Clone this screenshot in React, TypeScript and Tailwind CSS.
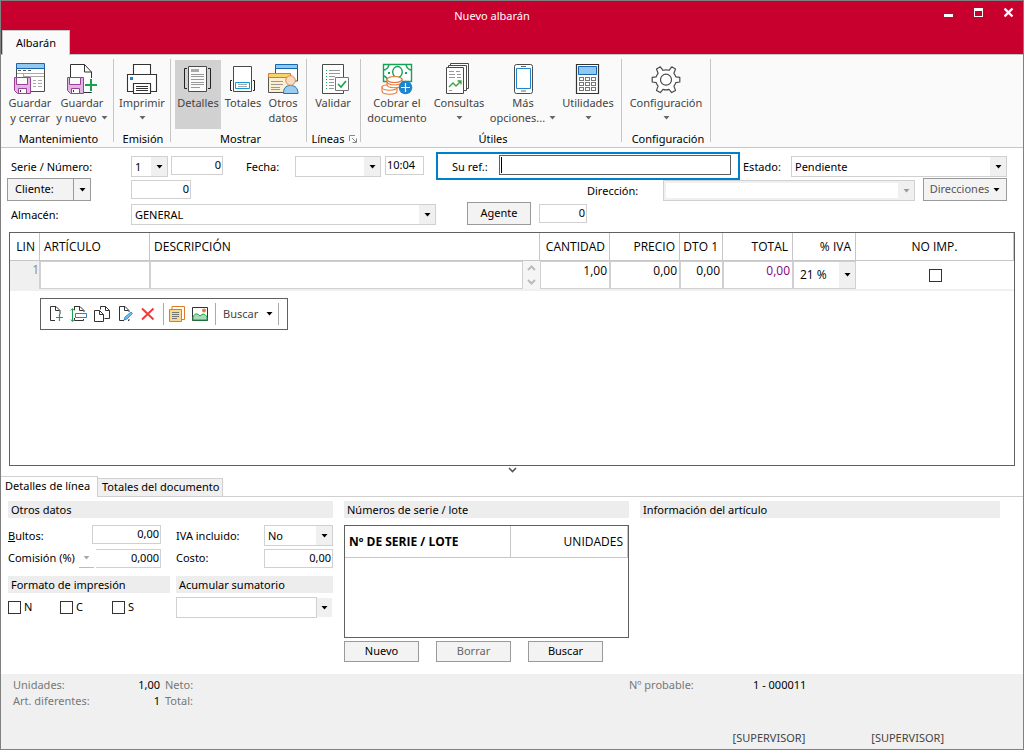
import React from "react";

const LINE = "#4a4a4a";

function Caret({ className = "text-black" }: { className?: string }) {
  return (
    <svg width="7" height="4" viewBox="0 0 7 4" className={"shrink-0 " + className} aria-hidden="true">
      <path d="M0.5 0h6L3.5 3.6z" fill="currentColor" />
    </svg>
  );
}

function Floppy({ x, y }: { x: number; y: number }) {
  return (
    <g transform={`translate(${x} ${y})`} stroke="#9b3f9b">
      <path d="M.5.5h16v16h-13l-3-3z" fill="#dfb6df" />
      <path d="M2.500.5h11v7h-11z" fill="#fafafa" />
      <path d="M4.500 11.500h8v5h-8z" fill="#fafafa" />
      <path d="M6.500 13v2" stroke="#333" />
    </g>
  );
}

function SaveCloseIcon() {
  return (
    <svg width="32" height="32" viewBox="0 0 32 32" fill="none">
      <path d="M2.500 2.500h28v26h-28z" fill="#fff" stroke={LINE} />
      <path d="M2.500.5h28v5h-28z" fill="#91c8f0" stroke="#1667b0" />
      <path d="M4 7.500h3m2 0h3m2 0h3" stroke="#555" />
      <path d="M3 10.500h27M9.500 11v3M9 13.500h21" stroke="#aaa" />
      <path d="M19 17.500h3m2 0h4M19 20.500h3m2 0h4M19 23.500h3m2 0h4" stroke="#aaa" />
      <Floppy x={0} y={14} />
    </svg>
  );
}

function SaveNewIcon() {
  return (
    <svg width="32" height="32" viewBox="0 0 32 32" fill="none">
      <path d="M4.500 1.500h14l7 7.500v20.500h-21z" fill="#fff" stroke="#333" />
      <path d="M18.500 1.500v7.500h7" stroke="#333" />
      <path d="M25.500 15v14" stroke="#fafafa" strokeWidth="4" />
      <Floppy x={1} y={14} />
      <path d="M25 16v12M19 22h12" stroke="#16a34a" strokeWidth="2" />
    </svg>
  );
}

function PrintIcon() {
  return (
    <svg width="32" height="32" viewBox="0 0 32 32" fill="none" stroke="#333" strokeWidth="1.100">
      <path d="M7.500 11V1.500h17V11" fill="#fff" />
      <path d="M1.500 11.500h29v17h-6v-7h-17v7h-6z" fill="#fff" />
      <path d="M7.500 20.500h17v10h-17z" fill="#fff" />
      <path d="M10 23.500h12m-12 2h12m-12 2h12" strokeWidth="1" />
      <path d="M4 14h3v3H4z" fill="#1d84cf" stroke="none" />
    </svg>
  );
}

function DetailsIcon() {
  return (
    <svg width="32" height="32" viewBox="0 0 32 32" fill="none">
      <path d="M6.500 3.500h18v25h-18z" fill="#fafafa" stroke={LINE} />
      <path d="M9 6h8v3H9z" fill="#aaa" />
      <path d="M9 11.500h13m-13 2h13m-13 3h13m-13 3h13m-13 2h13m-13 3h9" stroke="#999" />
      <path d="M5 5.500H2.500v20H5M26 5.500h2.500v20H26" stroke="#222" />
    </svg>
  );
}

function TotalsIcon() {
  return (
    <svg width="32" height="32" viewBox="0 0 32 32" fill="none">
      <path d="M6.500 3.500h18v25h-18z" fill="#fff" stroke={LINE} />
      <path d="M8.500 19.500h14v6h-14z" stroke="#1597d5" />
      <path d="M11 21.500h9m-9 2h9" stroke="#aaa" />
      <path d="M5 17.500H3.500v10H5M26 17.500h1.500v10H26" stroke="#222" />
    </svg>
  );
}

function OtherIcon() {
  return (
    <svg width="32" height="32" viewBox="0 0 32 32" fill="none">
      <path d="M8.500 5h22v13h-22z" fill="#fff" stroke={LINE} />
      <path d="M8.500 1.500h22V5.500h-22z" fill="#91c8f0" stroke="#1667b0" />
      <path d="M1.500 11h22v18.500h-22z" fill="#fdf0cf" stroke="#555" />
      <path d="M1.500 10.500h22V14.500h-22z" fill="#f9d36b" stroke="#e07a26" />
      <path d="M4 18.500h12m-12 3h12m-12 3h9m-9 2h9" stroke="#999" />
      <path d="M16.500 30.500c0-5 2-8 7-8s7.500 3 7.500 8z" fill="#9bcdf0" stroke="#1d74b8" />
      <circle cx="23.500" cy="17.500" r="4.800" fill="#f9dcc0" stroke="#dc8b50" />
    </svg>
  );
}

function ValidateIcon() {
  return (
    <svg width="32" height="32" viewBox="0 0 32 32" fill="none">
      <path d="M5.500 1.500h21v29h-21z" fill="#fff" stroke={LINE} />
      <path d="M12 7.500h11m-11 3h11m-11 3h6m-6 3h5m-5 3h5m-5 3h5m-5 3h5" stroke="#999" />
      <path d="M9.500 7v1m0 5v1m0 5v1m0 5v1" stroke="#16a34a" />
      <path d="M9.500 10v1m0 5v1m0 5v1" stroke="#d33" />
      <path d="M18.500 14.500h13v13h-13z" fill="#fff" stroke="#777" />
      <path d="m21 21 3 3 5-6" stroke="#16a34a" strokeWidth="1.600" />
    </svg>
  );
}

function MoneyIcon() {
  return (
    <svg width="32" height="32" viewBox="0 0 32 32" fill="none">
      <path d="M2.500 1.500h28v17h-28z" fill="#fff" stroke="#16a05a" strokeWidth="1.400" />
      <path d="M2 7c3 0 5-2 6-5M31 7c-3 0-5-2-6-5M2 13c3 0 4 2 5 5" stroke="#16a05a" strokeWidth="1.400" />
      <ellipse cx="16.500" cy="9" rx="4.800" ry="5.500" stroke="#16a05a" strokeWidth="1.400" />
      <path d="M7 10h2M24 10h2" stroke="#16a05a" strokeWidth="2" />
      <g fill="#fff" stroke="#e5793a" strokeWidth="1.100">
        <path d="M1 24v4c0 2 3.500 3.200 7.500 3.200S16 30 16 28v-4z" />
        <ellipse cx="8.500" cy="24.500" rx="7.500" ry="2.700" />
        <path d="M6 16v5.500c0 2 3.500 3.200 7.500 3.200S21 23.500 21 21.500V16z" />
        <path d="M6 19c2 4 13 4 15 0" />
        <ellipse cx="13.500" cy="16.500" rx="7.500" ry="3" />
      </g>
      <circle cx="24.500" cy="24.500" r="6.800" fill="#1d84cf" />
      <path d="M24.500 20v9M20 24.500h9" stroke="#fff" strokeWidth="1.200" />
    </svg>
  );
}

function QueriesIcon() {
  return (
    <svg width="32" height="32" viewBox="1 0 32 32" fill="#fff" stroke={LINE}>
      <path d="M8.500.5h18v25h-18z" />
      <path d="M6.500 2.500h18v25h-18z" />
      <path d="M4.500 4.500h17v26h-17z" />
      <path d="M7 8.500h5m2 0h4M7 11.500h6m2 0h4M7 14.500h6m2 0h4M7 27.500h3" stroke="#999" />
      <path d="m7 24 4-4 3 3 5-5m-3.500 0H19v3.500" fill="none" stroke="#38a33c" strokeWidth="1.300" />
    </svg>
  );
}

function PhoneIcon() {
  return (
    <svg width="32" height="32" viewBox="0 0 32 32" fill="none">
      <rect x="7.500" y="1.500" width="18" height="29" rx="2" fill="#fff" stroke={LINE} />
      <path d="M9.500 5.500h14v20h-14z" stroke="#1d84cf" />
      <path d="M14 3.500h5M14 28h5" stroke="#666" />
    </svg>
  );
}

function CalculatorIcon() {
  const cells = [0, 1, 2].flatMap((r) => [0, 1, 2].map((c) => [c, r]));
  return (
    <svg width="32" height="32" viewBox="0 0 32 32" fill="none">
      <path d="M4.500 1.500h22v29h-22z" fill="#fff" stroke="#333" strokeWidth="1.200" />
      <path d="M6.500 3.500h18v8h-18z" fill="#91c8f0" stroke="#1667b0" />
      {cells.map(([c, r]) => (
        <rect key={`${c}-${r}`} x={7.5 + c * 6} y={14.500 + r * 5} width="4" height="3" stroke="#777" />
      ))}
    </svg>
  );
}

function GearIcon() {
  return (
    <svg width="32" height="32" viewBox="0 0 32 32" fill="#fff" stroke={LINE} strokeWidth="1.200" strokeLinejoin="round">
      <path d="m13 7.300-2.700-3.500L6.500 6l1.600 4.300a10 10 0 0 0-1.900 3.500l-4 .6v4.600l4 .6a10 10 0 0 0 1.900 3.500L6.500 27.400l3.800 2.200 2.700-3.200a10 10 0 0 0 6 0l2.700 3.200 3.800-2.200-1.600-4.300a10 10 0 0 0 1.900-3.500l4-.6v-4.600l-4-.6a10 10 0 0 0-1.900-3.500L25.500 6l-3.800-2.200-2.700 3.500a10 10 0 0 0-6 0z" />
      <circle cx="16" cy="16.700" r="5.500" />
    </svg>
  );
}

type RibbonButtonProps = {
  icon: React.ReactNode;
  top: string;
  bottom?: string;
  menu?: boolean;
  active?: boolean;
  className: string;
};

function RibbonButton({ icon, top, bottom, menu, active, className }: RibbonButtonProps) {
  return (
    <button
      className={`flex h-[69px] shrink-0 flex-col items-center pt-[3px] leading-[15px] text-[#444] ${active ? "bg-[#d1d1d1]" : ""} ${className}`}
    >
      {icon}
      <span className="whitespace-nowrap">{top}</span>
      {(bottom || menu) && (
        <span className="flex h-[15px] items-center gap-1 whitespace-nowrap">
          {bottom}
          {menu && <Caret className="text-[#666]" />}
        </span>
      )}
    </button>
  );
}

function Group({ label, className, launcher, children }: { label: string; className: string; launcher?: boolean; children: React.ReactNode }) {
  return (
    <section className={`flex flex-col justify-between border-r border-[#c6c6c6] ${className}`} aria-label={label}>
      <div className="flex pt-px">{children}</div>
      <div className="-mb-1 flex h-[14px] items-center justify-center gap-1 whitespace-nowrap leading-[14px]">
        {label}
        {launcher && (
          <svg width="8" height="8" viewBox="0 0 8 8" fill="none" stroke="#888" aria-hidden="true">
            <path d="M.5 6V.5H6M3 3l4 4M7.500 3.500v4h-4" />
          </svg>
        )}
      </div>
    </section>
  );
}

function Combo({ label, value, className, disabled }: { label: string; value: string; className: string; disabled?: boolean }) {
  return (
    <div className={`relative h-[21px] border border-[#d0d0d0] ${disabled ? "bg-[#f0f0f0] p-0.5" : "bg-white"} ${className}`}>
      <select aria-label={label} disabled={disabled} className="block h-full w-full appearance-none bg-white pl-[3px] pr-4 pt-px outline-none">
        <option>{value}</option>
      </select>
      <span className="pointer-events-none absolute inset-y-0 right-0 flex w-4 items-center justify-center bg-[#f0f0f0]">
        <Caret className={disabled ? "text-[#999]" : "text-black"} />
      </span>
    </div>
  );
}

function Num({ label, value, className, align = "text-right" }: { label: string; value: string; className: string; align?: string }) {
  return (
    <input
      aria-label={label}
      defaultValue={value}
      className={`h-[19px] min-w-0 border border-[#d0d0d0] bg-white px-px pb-0.5 outline-none ${align} ${className}`}
    />
  );
}

function PushButton({ children, className }: { children: React.ReactNode; className: string }) {
  return (
    <button type="button" className={`flex items-center justify-center border border-[#9a9a9a] bg-[#f3f3f3] ${className}`}>{children}</button>
  );
}

function Heading({ children, className = "" }: { children: React.ReactNode; className?: string }) {
  return <h2 className={`h-[17px] bg-[#ededed] pl-[3px] leading-[17px] ${className}`}>{children}</h2>;
}

function Tick({ label, className = "" }: { label: string; className?: string }) {
  return (
    <label className={`flex items-center gap-[3px] ${className}`}>
      <input type="checkbox" className="h-[13px] w-[13px] appearance-none border border-[#333] bg-white" />
      {label}
    </label>
  );
}

function ToolButton({ label, children }: { label: string; children: React.ReactNode }) {
  return (
    <button aria-label={label} className="flex h-5 w-[23px] shrink-0 items-center justify-start pl-[2px]">
      <svg width="18" height="18" viewBox="0 0 18 18" fill="none" stroke="#333">
        {children}
      </svg>
    </button>
  );
}

function LineToolbar() {
  return (
    <div role="toolbar" aria-label="Líneas" className="ml-[30px] mt-[7px] flex h-8 w-[248px] items-center border border-[#606060] pl-1">
      <ToolButton label="Nueva línea">
        <path d="M8 15.500H3.500v-14H9l4 4V9M8.500 1.500v4h4" />
        <path d="M12.500 9v7M9 12.500h7" stroke="#16a34a" strokeWidth="1.200" />
      </ToolButton>
      <ToolButton label="Insertar línea">
        <path d="M4 1.500h6l4 4V7M9.500 1.500v4h4M4.500 1.500V5M4.500 13v2.500h9V14" />
        <path d="M5.500 8.500h11v4h-11z" stroke="#1d84cf" />
        <path d="M2.500 4v12M.8 5.500l1.700-2 1.700 2M.8 14.500l1.700 2 1.700-2" stroke="#16a34a" />
      </ToolButton>
      <ToolButton label="Duplicar línea">
        <path d="M7.500 4.500v-3h5l4 4v8h-5M12.500 1.500v4h4" />
        <path d="M1.500 5.500h5l4 4v7h-9zM6.500 5.500v4h4" fill="#fff" />
      </ToolButton>
      <ToolButton label="Modificar línea">
        <path d="M8 15.500H3.500v-14H9l4 4V7M8.500 1.500v4h4M12 15.500h1V14" />
        <path d="m8 15 1-3 6-5 1.500 1.500L11 14z" fill="#78b9ea" stroke="#1d84cf" strokeWidth=".8" />
      </ToolButton>
      <ToolButton label="Borrar línea">
        <path d="m3 3.500 11.500 11M14.500 3.500 3 14.500" stroke="#ef3b3b" strokeWidth="2" />
      </ToolButton>
      <span className="ml-[3px] mr-0.5 h-[22px] w-px shrink-0 bg-[#aaa]" />
      <ToolButton label="Notas">
        <path d="M4 4V1.500h12.500v13H14" stroke="#e07a26" />
        <path d="M1.500 4.500h12v12h-12z" fill="#f9d98c" stroke="#e07a26" />
        <path d="M4 7.500h7M4 9.500h7m-7 2h7m-7 2h5" stroke="#777" />
      </ToolButton>
      <ToolButton label="Imagen">
        <path d="M1.500 2.500h15v13h-15z" fill="#fff" />
        <path d="M2 12c2-4 4-4 7-1 3-3 5-2 7 1v3H2z" fill="#a7dcb8" stroke="#16a34a" />
        <circle cx="13" cy="5.500" r="1.900" fill="#e5793a" stroke="none" />
      </ToolButton>
      <span className="ml-[3px] h-[22px] w-px shrink-0 bg-[#aaa]" />
      <button className="flex items-center gap-2 pl-[7px] pr-[5px] text-[#444]">
        Buscar <Caret />
      </button>
      <span className="h-[22px] w-px shrink-0 bg-[#aaa]" />
    </div>
  );
}

const headCell = "border-r border-b border-[#c6c6c6] font-normal";
const bodyCell = "block h-7 w-full border border-[#d0d0d0] bg-white pr-0.5 pb-2.5 text-right outline-none";

function Lines() {
  return (
    <div className="mx-2 mt-1.5 min-h-[234px] flex-1 border border-[#606060]">
      <table className="w-full table-fixed border-separate border-spacing-0 font-['Open_Sans',sans-serif] text-[12px]">
        <colgroup>
          <col className="w-[30px]" />
          <col className="w-[110px]" />
          <col />
          <col className="w-[70px]" />
          <col className="w-[70px]" />
          <col className="w-[43px]" />
          <col className="w-[70px]" />
          <col className="w-[63px]" />
          <col className="w-[158px]" />
        </colgroup>
        <thead>
          <tr className="h-7">
            <th className={`${headCell} pr-1 text-right`}>LIN</th>
            <th className={`${headCell} pl-1 text-left`}>ARTÍCULO</th>
            <th className={`${headCell} pl-1 text-left`}>DESCRIPCIÓN</th>
            <th className={`${headCell} pr-1 text-right`}>CANTIDAD</th>
            <th className={`${headCell} pr-1 text-right`}>PRECIO</th>
            <th className={`${headCell} pr-1 text-right`}>DTO 1</th>
            <th className={`${headCell} pr-1 text-right`}>TOTAL</th>
            <th className={`${headCell} pr-1 text-right`}>% IVA</th>
            <th className={`${headCell} text-center`}>NO IMP.</th>
          </tr>
        </thead>
        <tbody>
          <tr className="[&>td]:border-b-2 [&>td]:border-[#f0f0f0] [&>td]:p-0">
            <td className="bg-[#f0f0f0]">
              <span className="block h-7 border-r border-[#d0d0d0] text-right text-[#888]">1</span>
            </td>
            <td><input aria-label="Artículo" className={bodyCell} /></td>
            <td>
              <div className="flex">
                <input aria-label="Descripción" className="h-7 min-w-0 flex-1 border border-[#d0d0d0] bg-white outline-none" />
                <span className="flex w-[17px] flex-col items-center justify-around bg-[#f5f5f5]">
                  <svg width="9" height="6" viewBox="0 0 9 6" fill="none" stroke="#bbb" strokeWidth="2"><path d="m1 5 3.500-3.500L8 5" /></svg>
                  <svg width="9" height="6" viewBox="0 0 9 6" fill="none" stroke="#bbb" strokeWidth="2"><path d="m1 1 3.500 3.500L8 1" /></svg>
                </span>
              </div>
            </td>
            <td><input aria-label="Cantidad" defaultValue="1,00" className={bodyCell} /></td>
            <td><input aria-label="Precio" defaultValue="0,00" className={bodyCell} /></td>
            <td><input aria-label="Dto 1" defaultValue="0,00" className={bodyCell} /></td>
            <td><input aria-label="Total" defaultValue="0,00" className={`${bodyCell} text-[#800080]`} /></td>
            <td>
              <div className="relative h-7 border border-[#d0d0d0]">
                <select aria-label="% IVA" className="h-full w-full appearance-none bg-white pl-1.5 outline-none">
                  <option>21 %</option>
                </select>
                <span className="pointer-events-none absolute inset-y-0 right-0 flex w-4 items-center justify-center bg-[#f0f0f0]">
                  <Caret />
                </span>
              </div>
            </td>
            <td>
              <div className="flex h-7 items-center justify-center">
                <input type="checkbox" aria-label="No imp." className="h-[13px] w-[13px] appearance-none border border-[#333]" />
              </div>
            </td>
          </tr>
        </tbody>
      </table>
      <LineToolbar />
    </div>
  );
}

function DetailPanel() {
  return (
    <div className="flex gap-[11px] pb-3 pl-[7px] pr-[23px] pt-1">
      <div className="w-[325px] shrink-0">
        <Heading>Otros datos</Heading>
        <div className="mt-[7px] flex h-6 items-start">
          <span className="w-[84px] leading-[21px]"><u>B</u>ultos:</span>
          <Num label="Bultos" value="0,00" className="w-[69px]" />
          <span className="ml-[15px] w-[88px] leading-[21px]">IVA incluido:</span>
          <Combo label="IVA incluido" value="No" className="w-[69px]" />
        </div>
        <div className="flex h-[27px] items-start">
          <span className="w-[71px] whitespace-nowrap leading-[18px]">Comisión (%)</span>
          <button aria-label="Tipo de comisión" className="mr-[2px] flex h-[19px] w-[15px] items-center justify-center border-b border-[#bbb]">
            <Caret className="text-[#aaa]" />
          </button>
          <Num label="Comisión (%)" value="0,000" className="w-[65px] border-l-0" />
          <span className="ml-[15px] w-[88px] leading-[18px]">Costo:</span>
          <Num label="Costo" value="0,00" className="w-[69px]" />
        </div>
        <div className="flex gap-1.5">
          <Heading className="w-[162px]">Formato de impresión</Heading>
          <Heading className="flex-1">Acumular sumatorio</Heading>
        </div>
        <div className="mt-1 flex h-[21px] items-center">
          <Tick label="N" className="w-[52px]" />
          <Tick label="C" className="w-[52px]" />
          <Tick label="S" className="w-16" />
          <div className="flex h-[21px] w-[156px] items-center">
            <select aria-label="Acumular sumatorio" className="h-full flex-1 appearance-none border border-[#d0d0d0] bg-white outline-none">
              <option></option>
            </select>
            <span className="flex h-[19px] w-[15px] items-center justify-center bg-[#f0f0f0]">
              <Caret />
            </span>
          </div>
        </div>
      </div>
      <div className="w-[285px] shrink-0">
        <Heading>Números de serie / lote</Heading>
        <div className="mt-[7px] h-[113px] border border-[#606060]">
          <table className="w-full border-separate border-spacing-0 font-['Open_Sans',sans-serif] text-[12px]">
            <thead>
              <tr className="h-8">
                <th className="w-[166px] border-r border-b border-[#c6c6c6] pl-1 text-left font-bold">Nº DE SERIE / LOTE</th>
                <th className="border-r border-b border-[#c6c6c6] pr-1 text-right font-normal">UNIDADES</th>
              </tr>
            </thead>
          </table>
        </div>
        <div className="mt-[3px] flex gap-[17px]">
          <PushButton className="h-[21px] w-[75px]">Nuevo</PushButton>
          <PushButton className="h-[21px] w-[75px] text-[#666]">Borrar</PushButton>
          <PushButton className="h-[21px] w-[75px]">Buscar</PushButton>
        </div>
      </div>
      <div className="min-w-0 flex-1">
        <Heading>Información del artículo</Heading>
      </div>
    </div>
  );
}

export default function App() {
  return (
    <div className="flex min-h-screen flex-col border border-[#808080] bg-white font-['Noto_Sans','Open_Sans',sans-serif] text-[11px] text-black">
      <header className="relative flex h-[53px] shrink-0 items-end bg-[#c8002d]">
        <h1 className="absolute inset-x-0 top-[6px] pr-10 text-center leading-[18px] text-white">Nuevo albarán</h1>
        <button className="relative z-10 -mb-px ml-px h-[25px] w-[68px] border-x border-t border-[#c6c6c6] bg-[#fafafa]">Albarán</button>
        <div className="relative ml-auto flex items-start gap-5 self-start pr-[9px] pt-[6px] text-white">
          <button aria-label="Minimizar"><svg width="10" height="11" viewBox="0 0 10 11"><path d="M0 7h9v3H0z" fill="currentColor" /></svg></button>
          <button aria-label="Maximizar"><svg width="10" height="11" viewBox="0 0 10 11"><path d="M0 1h9v9H0zM1 4v5h7V4z" fill="currentColor" fillRule="evenodd" /></svg></button>
          <button aria-label="Cerrar"><svg width="10" height="11" viewBox="0 0 10 11"><path d="m.5 1.500 8 8M8.500 1.500l-8 8" stroke="currentColor" strokeWidth="2.400" /></svg></button>
        </div>
      </header>

      <nav className="flex h-[94px] shrink-0 border-y border-[#c6c6c6] bg-[#fafafa] pb-[5px] pt-1" aria-label="Cinta">
        <Group label="Mantenimiento" className="w-[113px] pl-[3px]">
          <RibbonButton icon={<SaveCloseIcon />} top="Guardar" bottom="y cerrar" className="w-[52px]" />
          <RibbonButton icon={<SaveNewIcon />} top="Guardar" bottom="y nuevo" menu className="w-[52px]" />
        </Group>
        <Group label="Emisión" className="w-[57px] pl-0.5">
          <RibbonButton icon={<PrintIcon />} top="Imprimir" menu className="w-[52px]" />
        </Group>
        <Group label="Mostrar" className="w-[136px] pl-1">
          <RibbonButton icon={<DetailsIcon />} top="Detalles" active className="w-[46px]" />
          <RibbonButton icon={<TotalsIcon />} top="Totales" className="w-11" />
          <RibbonButton icon={<OtherIcon />} top="Otros" bottom="datos" className="w-9" />
        </Group>
        <Group label="Líneas" launcher className="w-[54px] pl-px">
          <RibbonButton icon={<ValidateIcon />} top="Validar" className="w-[50px]" />
        </Group>
        <Group label="Útiles" className="w-[261px] pl-1">
          <RibbonButton icon={<MoneyIcon />} top="Cobrar el" bottom="documento" className="w-16" />
          <RibbonButton icon={<QueriesIcon />} top="Consultas" menu className="w-[60px]" />
          <RibbonButton icon={<PhoneIcon />} top="Más" bottom="opciones..." menu className="w-[68px]" />
          <RibbonButton icon={<CalculatorIcon />} top="Utilidades" menu className="w-[62px]" />
        </Group>
        <Group label="Configuración" className="w-[89px] pl-1">
          <RibbonButton icon={<GearIcon />} top="Configuración" menu className="w-20" />
        </Group>
      </nav>

      <form className="flex flex-col pl-1.5 pr-4 pt-1">
        <div className="flex h-[26px] items-start pt-1">
          <span className="w-[124px] pl-1 leading-[21px]">Serie / Número:</span>
          <Combo label="Serie" value="1" className="w-[37px]" />
          <Num label="Número" value="0" className="ml-[3px] w-[52px]" />
          <span className="ml-[23px] w-[49px] leading-[21px]">Fecha:</span>
          <Combo label="Fecha" value="" className="w-[86px]" />
          <Num label="Hora" value="10:04" align="text-left" className="ml-1 w-[39px]" />
          <div className="-mt-1 ml-3 flex h-7 w-[304px] items-start border-2 border-[#0080cc] pl-3.5 pt-px">
            <label htmlFor="ref" className="w-[47px] leading-[24px]">Su ref.:</label>
            <div className="flex h-5 w-[232px] border border-[#606060] bg-white p-px">
              <span className="h-4 w-px bg-black" />
              <input id="ref" className="h-4 min-w-0 flex-1 outline-none" />
            </div>
          </div>
          <span className="ml-[3px] w-12 leading-[21px]">Estado:</span>
          <Combo label="Estado" value="Pendiente" className="min-w-0 flex-1" />
        </div>
        <div className="flex h-6 items-start">
          <div className="flex h-[23px] w-[84px] border border-[#9a9a9a] bg-[#f3f3f3]">
            <button type="button" className="flex-1 border-r border-[#9a9a9a] pl-[7px] text-left">Cliente:</button>
            <button type="button" aria-label="Opciones de cliente" className="flex w-4 items-center justify-center"><Caret /></button>
          </div>
          <Num label="Cliente" value="0" className="ml-10 mt-0.5 w-[60px]" />
          <span className="ml-[396px] w-[76px] leading-[25px]">Dirección:</span>
          <Combo label="Dirección" value="" disabled className="mt-0.5 min-w-0 flex-1" />
          <PushButton className="ml-2 h-[23px] w-[84px] gap-1 text-[#555]">
            Direcciones <Caret />
          </PushButton>
        </div>
        <div className="flex h-6 items-start">
          <span className="w-[124px] pl-1 leading-[25px]">Almacén:</span>
          <Combo label="Almacén" value="GENERAL" className="mt-0.5 w-[305px]" />
          <PushButton className="ml-[31px] h-[23px] w-16">Agente</PushButton>
          <Num label="Agente" value="0" className="ml-2 mt-0.5 w-12" />
        </div>
      </form>

      <Lines />

      <div className="flex h-2 items-center justify-center">
        <svg width="9" height="6" viewBox="0 0 9 6" fill="none" stroke="#555" strokeWidth="1.600"><path d="m1 1 3.500 3.500L8 1" /></svg>
      </div>

      <div className="mt-0.5 flex items-end">
        <button className="h-[21px] w-[97px] whitespace-nowrap border-r border-t border-[#d0d0d0] pb-px pl-1 text-left">Detalles de línea</button>
        <button className="h-[19px] w-[125px] whitespace-nowrap border-y border-r border-[#d0d0d0] bg-[#f0f0f0] pl-1 text-left">Totales del documento</button>
        <span className="flex-1 border-b border-[#d0d0d0]" />
      </div>

      <DetailPanel />

      <footer className="flex h-[75px] shrink-0 flex-col justify-between bg-[#f0f0f0] px-3 pb-0.5 pt-[3px]">
        <div className="flex leading-4">
          <dl className="grid grid-cols-[100px_47px] text-[#777]">
            <dt>Unidades:</dt>
            <dd className="text-right text-black">1,00</dd>
            <dt>Art. diferentes:</dt>
            <dd className="text-right text-black">1</dd>
          </dl>
          <div className="ml-[5px] w-[464px] text-[#777]">
            <div>Neto:</div>
            <div>Total:</div>
          </div>
          <span className="w-[124px] text-[#777]">Nº probable:</span>
          <span>1 - 000011</span>
        </div>
        <div className="flex justify-end gap-[66px] pr-[67px] leading-[18px] text-[#444]">
          <span>[SUPERVISOR]</span>
          <span>[SUPERVISOR]</span>
        </div>
      </footer>
    </div>
  );
}
